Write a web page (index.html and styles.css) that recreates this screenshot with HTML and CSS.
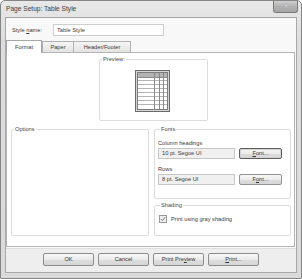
FILE: index.html
```html
<!DOCTYPE html>
<html lang="en">
<head>
<meta charset="UTF-8">
<title>Page Setup: Table Style</title>
<link rel="stylesheet" href="styles.css">
</head>
<body>
<div class="window">
	<div class="titlebar">
		<span class="title">Page Setup: Table Style</span>
		<span class="close">&#x2715;</span>
	</div>
	<div class="client">
		<div class="style-row">
			<label class="style-label">Style <u>n</u>ame:</label>
			<div class="field">Table Style</div>
		</div>
		<div class="tabs">
			<span class="tab active">Format</span>
			<span class="tab paper">Paper</span>
			<span class="tab hf">Header/Footer</span>
		</div>
		<div class="panel">
			<fieldset class="preview">
				<legend>Preview:</legend>
				<svg class="table-icon" width="35" height="42" viewBox="0 0 35 42">
					<rect x="0.5" y="0.5" width="34" height="41" fill="#d6d6d6" stroke="#6b6b6b"/>
					<rect x="2.5" y="2.5" width="30" height="37" fill="#fff" stroke="#7d7d7d"/>
					<rect x="3" y="3" width="29" height="4" fill="#b3b3b3"/>
					<g stroke="#b4b4b4">
						<line x1="3" y1="10.5" x2="32" y2="10.5"/>
						<line x1="3" y1="14.5" x2="32" y2="14.5"/>
						<line x1="3" y1="18.5" x2="32" y2="18.5"/>
						<line x1="3" y1="22.5" x2="32" y2="22.5"/>
						<line x1="3" y1="26.5" x2="32" y2="26.5"/>
						<line x1="3" y1="30.5" x2="32" y2="30.5"/>
						<line x1="3" y1="34.5" x2="32" y2="34.5"/>
					</g>
					<g stroke="#8a8a8a">
						<line x1="3" y1="7.5" x2="32" y2="7.5"/>
						<line x1="19.5" y1="3" x2="19.5" y2="39"/>
						<line x1="24.5" y1="3" x2="24.5" y2="39"/>
						<line x1="28.5" y1="3" x2="28.5" y2="39"/>
					</g>
				</svg>
			</fieldset>
			<div class="cols">
				<fieldset class="options">
					<legend>Options</legend>
				</fieldset>
				<div class="side">
					<fieldset class="fonts">
						<legend>Fonts</legend>
						<div class="caption">Column headings</div>
						<div class="font-row">
							<div class="field grey">10 pt. Segoe UI</div>
							<span class="btn default"><u>F</u>ont...</span>
						</div>
						<div class="caption rows">Rows</div>
						<div class="font-row">
							<div class="field grey">8 pt. Segoe UI</div>
							<span class="btn">F<u>o</u>nt...</span>
						</div>
					</fieldset>
					<fieldset class="shading">
						<legend>Shading</legend>
						<div class="check-row">
							<svg class="check" width="8" height="8" viewBox="0 0 8 8">
								<rect x="0.5" y="0.5" width="7" height="7" fill="#eeeeee" stroke="#9a9a9a"/>
								<path d="M2 4.2 L3.4 5.6 L6 2.2" fill="none" stroke="#7a7a7a" stroke-width="1"/>
							</svg>
							<span>Print using gray shading</span>
						</div>
					</fieldset>
				</div>
			</div>
		</div>
		<div class="buttons">
			<span class="btn big">OK</span>
			<span class="btn big">Cancel</span>
			<span class="btn big">Print Pre<u>v</u>iew</span>
			<span class="btn big"><u>P</u>rint...</span>
		</div>
	</div>
</div>
</body>
</html>
```
FILE: styles.css
```css
body {
	margin: 0;
	font: 5.7px/8px "Liberation Sans", Arial, sans-serif;
	color: #3a3a3a;
}
u {
	text-decoration: underline;
}
.window {
	width: 302px;
	height: 279px;
	box-sizing: border-box;
	border: 1px solid #858585;
	border-radius: 5px 5px 1px 1px;
	background: linear-gradient(#e8e8e8, #dddddd 40px, #dadada);
	display: flex;
	flex-direction: column;
}
.titlebar {
	height: 16px;
	display: flex;
	justify-content: space-between;
	align-items: center;
	padding-left: 5px;
}
.title {
	font-size: 6.6px;
	color: #3c3c3c;
}
.close {
	align-self: flex-start;
	width: 25px;
	height: 12px;
	box-sizing: border-box;
	margin-right: 3px;
	border: 1px solid #7a7a7a;
	border-top: none;
	border-radius: 0 0 3px 3px;
	background: linear-gradient(#cfcfcf, #b2b2b2 50%, #a6a6a6);
	color: #f6f6f6;
	font-size: 5px;
	line-height: 11px;
	text-align: center;
	text-shadow: 0 0 1px #555;
}
.client {
	flex: 1;
	margin: 0 4px 5px 4px;
	border: 1px solid #a8a8a8;
	background: #f8f8f8;
	display: flex;
	flex-direction: column;
}
.style-row {
	display: flex;
	align-items: center;
	padding: 6px 0 0 6px;
}
.style-label {
	width: 41px;
}
.field {
	box-sizing: border-box;
	height: 12px;
	width: 111px;
	border: 1px solid #cdcdcd;
	background: #fff;
	padding-left: 3px;
	line-height: 10px;
}
.tabs {
	display: flex;
	align-items: flex-end;
	height: 12px;
	margin-top: 4px;
}
.tab {
	box-sizing: border-box;
	height: 11px;
	border: 1px solid #b1b1b1;
	border-bottom: none;
	background: linear-gradient(#f5f5f5, #e3e3e3);
	text-align: center;
	line-height: 10px;
}
.tab.active {
	position: relative;
	height: 13px;
	margin-bottom: -1px;
	width: 36px;
	background: #fff;
	border-color: #a6a6a6;
	line-height: 12px;
}
.tab.paper {
	width: 32px;
}
.tab.hf {
	width: 58px;
	margin-left: -1px;
}
.panel {
	flex: 1;
	margin: 0 1px 1px 0;
	border: 1px solid #b4b4b4;
	background: #fff;
	padding-bottom: 10px;
}
fieldset {
	margin: 0;
	padding: 0;
	border: 1px solid #dcdcdc;
	border-radius: 2px;
	min-width: 0;
}
legend {
	margin-left: 2px;
	padding: 0 1px;
	line-height: 8px;
	color: #474747;
}
.preview {
	width: 109px;
	box-sizing: border-box;
	margin: 2px 0 0 92px;
	padding: 7px 0 8px;
	display: flex;
	justify-content: center;
}
.table-icon {
	display: block;
	margin-left: -2px;
}
.cols {
	display: flex;
	gap: 5px;
	margin-top: 4px;
	padding: 0 3px 0 4px;
}
.options {
	width: 138px;
	box-sizing: border-box;
}
.side {
	flex: 1;
	display: flex;
	flex-direction: column;
}
.fonts {
	padding: 6px 6px 13px 3px;
}
.caption.rows {
	margin-top: 6px;
}
.font-row {
	display: flex;
	gap: 4px;
	margin-top: 1px;
}
.font-row .field {
	width: 77px;
	height: 11px;
	line-height: 9px;
}
.field.grey {
	background: #f0f0f0;
	border-color: #c6c6c6;
}
.btn {
	box-sizing: border-box;
	width: 43px;
	height: 11px;
	border: 1px solid #939393;
	border-radius: 2px;
	background: linear-gradient(#f7f7f7, #ebebeb 50%, #dddddd 51%, #d6d6d6);
	text-align: center;
	line-height: 9px;
	color: #333;
}
.btn.default {
	border-color: #5f5f5f;
	box-shadow: inset 0 0 0 1px #d2d2d2;
}
.shading {
	margin-top: 2px;
	padding: 6px 3px 12px 3px;
}
.check-row {
	display: flex;
	align-items: center;
	gap: 4px;
	height: 8px;
	padding-left: 1px;
}
.check {
	display: block;
}
.buttons {
	height: 19px;
	border-top: 1px solid #dedede;
	background: #eeeeee;
	display: flex;
	gap: 4px;
	padding: 4px 0 0 37px;
}
.btn.big {
	width: 51px;
	height: 13px;
	line-height: 11px;
	border-color: #8c8c8c;
}
```
